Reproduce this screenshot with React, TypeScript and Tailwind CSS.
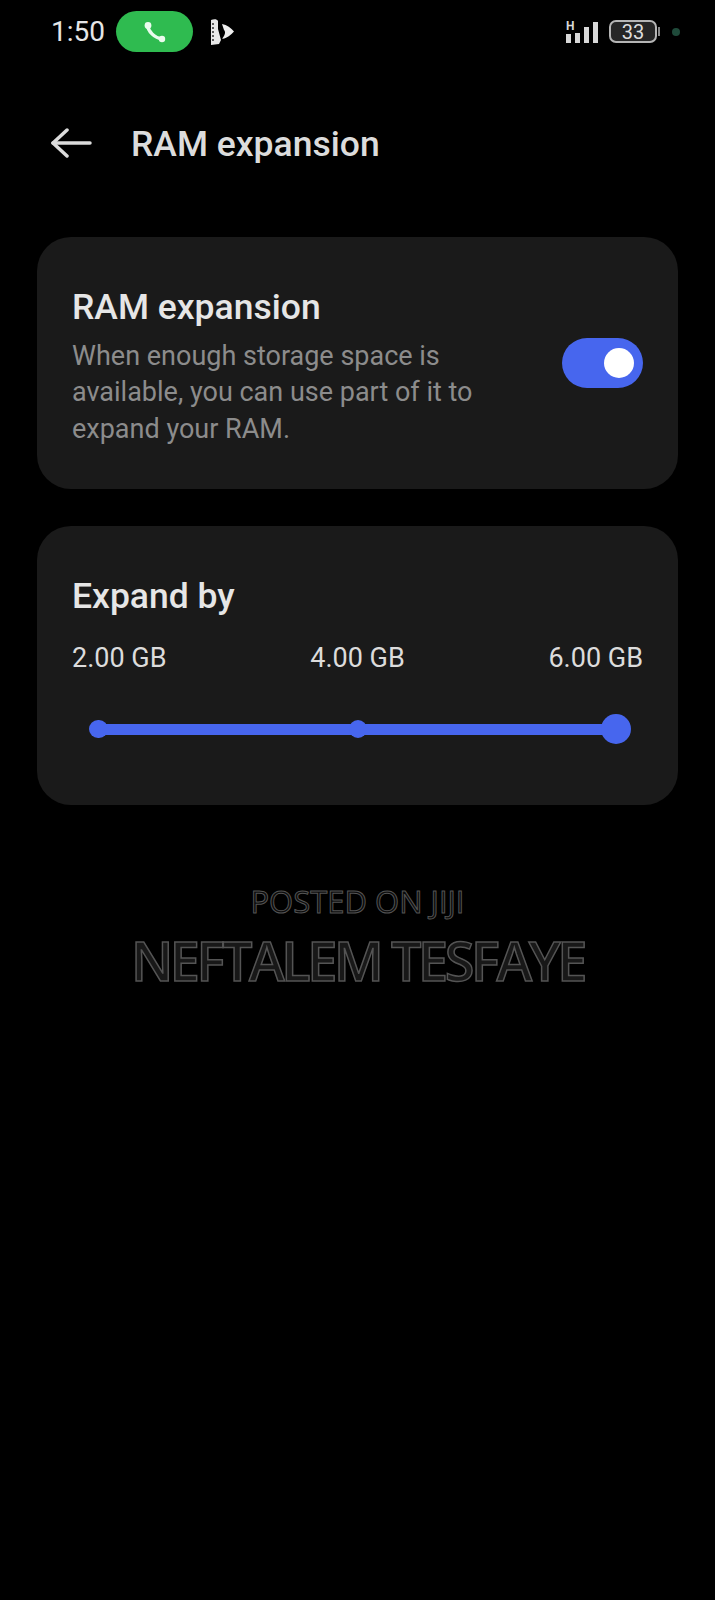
const uiFont = "font-['Roboto',sans-serif]";

function PhoneIcon() {
  return (
    <svg width="26" height="26" viewBox="0 0 26 26" fill="none">
      <path d="M5.5 6 C6 12, 12 19, 20.5 20" stroke="#eafbee" strokeWidth="3.4" strokeLinecap="round" />
      <circle cx="6" cy="6.5" r="3.4" fill="#eafbee" />
      <circle cx="20" cy="20" r="3.2" fill="#eafbee" />
    </svg>
  );
}

function MediaIcon() {
  return (
    <svg width="26" height="28" viewBox="0 0 26 28" fill="none">
      <path d="M2 2 C5 1 8 1 9 3 L9 11 L12 22 L10 26 L2 27 Z" fill="#e8e8e8" />
      <path d="M4 5 V25" stroke="#000" strokeWidth="1.2" strokeDasharray="2 2" />
      <path d="M13 6 C18 7 22 10 25 13.5 C22 17 18 20 13 21 C16 17 17 14 15 12 Z" fill="#efefef" />
    </svg>
  );
}

function BackArrow() {
  return (
    <svg width="42" height="32" viewBox="0 0 42 32" fill="none" stroke="#dcdcdc" strokeWidth="3.5" strokeLinecap="round" strokeLinejoin="round">
      <path d="M2 16 H39" />
      <path d="M16 3 L2 16 L16 29" />
    </svg>
  );
}

function StatusBar() {
  return (
    <div className="flex h-[63px] items-center pl-[51px] pr-[35px]">
      <span className="w-[54px] text-[28px] leading-none text-[#e6e6e6]">1:50</span>
      <div className="ml-[11px] flex h-[41px] w-[77px] items-center justify-center rounded-full bg-[#2fbb50]">
        <PhoneIcon />
      </div>
      <div className="ml-[16px]">
        <MediaIcon />
      </div>
      <div className="ml-auto flex items-center">
        <div className="relative flex h-[22px] items-end gap-[4px]">
          <span className="absolute -top-[1px] left-0 text-[12px] font-bold leading-none text-[#d8d8d8]">H</span>
          <span className="h-[9px] w-[5px] bg-[#d8d8d8]" />
          <span className="h-[10px] w-[5px] bg-[#d8d8d8]" />
          <span className="h-[16px] w-[5px] bg-[#d8d8d8]" />
          <span className="h-[21px] w-[5px] bg-[#d8d8d8]" />
        </div>
        <div className="ml-[11px] flex h-[23px] w-[48px] items-center justify-center rounded-[7px] border-2 border-[#b5b5b5] bg-[#262626] text-[20px] leading-none text-[#dedede]">
          33
        </div>
        <span className="ml-[1px] h-[9px] w-[2px] bg-[#8a8a8a]" />
        <span className="ml-[12px] h-[8px] w-[8px] rounded-full bg-[#1f4a3a]" />
      </div>
    </div>
  );
}

export default function App() {
  return (
    <div className={`${uiFont} h-[1600px] w-[715px] overflow-hidden bg-black`}>
      <StatusBar />

      <div className="mt-[50px] flex h-[60px] items-center pl-[51px]">
        <BackArrow />
        <h1 className="ml-[38px] pt-[3px] text-[35.5px] font-medium leading-none text-[#dcdcdc]">RAM expansion</h1>
      </div>

      <div className="mx-[37px] mt-[64px] flex h-[252px] items-center justify-between rounded-[34px] bg-[#1a1a1a] pl-[35px] pr-[35px]">
        <div className="pt-[8px]">
          <h2 className="text-[35.5px] font-medium leading-[40px] text-[#e6e6e6]">RAM expansion</h2>
          <p className="mt-[11px] w-[420px] text-[27px] leading-[36.5px] text-[#8c8c8c]">
            When enough storage space is available, you can use part of it to expand your RAM.
          </p>
        </div>
        <div className="flex h-[50px] w-[81px] items-center justify-end rounded-full bg-[#4766ee] pr-[9px]">
          <span className="h-[30px] w-[30px] rounded-full bg-white" />
        </div>
      </div>

      <div className="mx-[37px] mt-[37px] h-[279px] rounded-[34px] bg-[#1a1a1a] px-[35px] pt-[50px]">
        <h2 className="text-[35.5px] font-medium leading-[40px] text-[#e6e6e6]">Expand by</h2>
        <div className="mt-[26px] flex justify-between text-[27px] leading-[32px] text-[#dcdcdc]">
          <span>2.00 GB</span>
          <span>4.00 GB</span>
          <span>6.00 GB</span>
        </div>
        <div className="mt-[40px] flex items-center pl-[17px] pr-[12px]">
          <span className="h-[18px] w-[19px] shrink-0 rounded-full bg-[#4766ee]" />
          <span className="-mx-[3px] h-[11px] w-[247px] shrink-0 bg-[#4766ee]" />
          <span className="h-[18px] w-[18px] shrink-0 rounded-full bg-[#4766ee]" />
          <span className="-mx-[3px] h-[11px] flex-1 bg-[#4766ee]" />
          <span className="h-[30px] w-[30px] shrink-0 rounded-full bg-[#4766ee]" />
        </div>
      </div>

      <div className="mt-[74px] flex flex-col items-center font-['Open_Sans',sans-serif] opacity-[0.99]">
        <p className="text-[31px] leading-[44px] text-[#0c0c0c] [-webkit-text-stroke:1px_#555555]">POSTED ON JIJI</p>
        <p className="mt-[4px] text-[54px] font-semibold leading-[66px] tracking-[-3.4px] text-[#191919] [-webkit-text-stroke:1.5px_#555555]">
          NEFTALEM TESFAYE
        </p>
      </div>
    </div>
  );
}
